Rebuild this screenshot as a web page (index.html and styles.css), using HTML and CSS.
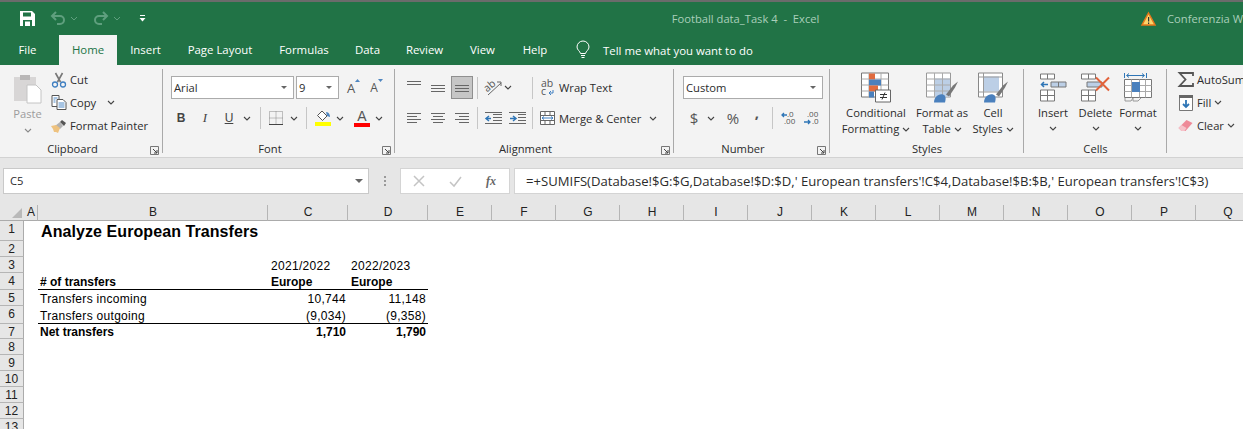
FILE: index.html
```html
<!DOCTYPE html>
<html lang="en">

<head>
    <meta charset="UTF-8">
    <title>Football data_Task 4 - Excel</title>
    <link rel="stylesheet" href="styles.css">
</head>

<body>
    <svg class="defs" width="0" height="0">
        <symbol id="chev" viewBox="0 0 8 5"><path d="M1 1l3 3 3-3" fill="none" stroke="#444" stroke-width="1.1"/></symbol>
        <symbol id="launch" viewBox="0 0 9 9"><path d="M.5 8.5v-8h8v8z M.5 .5" fill="none" stroke="#777"/><path d="M3 3l4 4M7 4v3H4" fill="none" stroke="#444"/></symbol>
        <symbol id="lines-left" viewBox="0 0 16 12"><path d="M1 1.5h14M1 4.5h10M1 7.5h14M1 10.5h10" stroke="#666"/></symbol>
        <symbol id="lines-center" viewBox="0 0 16 12"><path d="M1 1.5h14M3 4.5h10M1 7.5h14M3 10.5h10" stroke="#666"/></symbol>
        <symbol id="lines-right" viewBox="0 0 16 12"><path d="M1 1.5h14M5 4.5h10M1 7.5h14M5 10.5h10" stroke="#666"/></symbol>
    </svg>

    <header class="titlebar">
        <div class="quick">
            <svg class="save" width="15" height="15" viewBox="0 0 15 15"><path d="M0 0h12l3 3v12H0z" fill="#fff"/><path d="M3 1.5h8v4H3z" fill="#217346"/><path d="M3 9h9v6H3z" fill="#217346"/><path d="M5 10.5h5V15H5z" fill="#fff"/></svg>
            <svg class="undo" width="16" height="15" viewBox="0 0 16 15"><path d="M6 1L2 5l4 4M2 5h8a4 4 0 0 1 0 8H7" fill="none" stroke="#5f9f7e" stroke-width="2"/></svg>
            <svg class="qchev" width="8" height="5"><path d="M1 1l3 3 3-3" fill="none" stroke="#5f9f7e"/></svg>
            <svg class="redo" width="16" height="15" viewBox="0 0 16 15"><path d="M10 1l4 4-4 4M14 5H6a4 4 0 0 0 0 8h3" fill="none" stroke="#5f9f7e" stroke-width="2"/></svg>
            <svg class="qchev" width="8" height="5"><path d="M1 1l3 3 3-3" fill="none" stroke="#5f9f7e"/></svg>
            <svg class="custom" width="7" height="7" viewBox="0 0 7 7"><path d="M1 .5h5" stroke="#fff"/><path d="M.5 3h6L3.500 6.500z" fill="#fff"/></svg>
        </div>
        <div class="doc-title">Football data_Task 4&nbsp; -&nbsp; Excel</div>
        <div class="alert">
            <svg width="15" height="14" viewBox="0 0 15 14"><path d="M7.500 1L14 13H1z" fill="#fbd46b" stroke="#e8771a" stroke-width="1.500"/><path d="M7 5h1.200v4.500H7zM7 10.500h1.200V12H7z" fill="#333"/></svg>
            <span>Conferenzia W</span>
        </div>
    </header>

    <nav class="tabs">
        <span class="tab tab-file">File</span>
        <span class="tab tab-home">Home</span>
        <span class="tab tab-insert">Insert</span>
        <span class="tab tab-layout">Page Layout</span>
        <span class="tab tab-formulas">Formulas</span>
        <span class="tab tab-data">Data</span>
        <span class="tab tab-review">Review</span>
        <span class="tab tab-view">View</span>
        <span class="tab tab-help">Help</span>
        <svg class="bulb" width="14" height="18" viewBox="0 0 14 18"><path d="M4.500 12.500C4 10 1 9 1 6a6 6 0 0 1 12 0c0 3-3 4-3.500 6.500z" fill="none" stroke="#fff"/><path d="M5 14.500h4M5.500 16.500h3" stroke="#fff"/></svg>
        <span class="tell">Tell me what you want to do</span>
    </nav>

    <section class="ribbon">
        <!-- clipboard -->
        <div class="group g-clipboard">
            <div class="body body-row">
                <div class="paste">
                    <svg width="29" height="31" viewBox="0 0 29 31"><path d="M1 4h22v24H1z" fill="#d8d6d6"/><path d="M7 2h10v5H7z" fill="#b9b7b7"/><path d="M14 12h9l5 5v13H14z" fill="#fff" stroke="#c4c4c4"/></svg>
                    <span class="paste-label">Paste</span>
                    <svg class="chev chev-dim" width="8" height="5"><use href="#chev"/></svg>
                </div>
                <div class="small-list">
                    <div class="small">
                        <svg width="15" height="16" viewBox="0 0 15 16"><path d="M4 1l5 9M11 1L6 10" stroke="#777" stroke-width="1.600"/><circle cx="3.500" cy="12.500" r="2.500" fill="none" stroke="#3f7fc1" stroke-width="1.300"/><circle cx="11.500" cy="12.500" r="2.500" fill="none" stroke="#3f7fc1" stroke-width="1.300"/></svg>
                        <span>Cut</span>
                    </div>
                    <div class="small">
                        <svg width="15" height="15" viewBox="0 0 15 15"><path d="M.5.500h7v11h-7z" fill="#fff" stroke="#555"/><path d="M5.500 4.500h6l3 3v7h-9z" fill="#fff" stroke="#555"/><path d="M2 3h4M2 5h2M2 7h2M7 8h6M7 10h6M7 12h6" stroke="#4f8ac8"/></svg>
                        <span>Copy</span>
                        <svg class="chev chev-copy" width="8" height="5"><use href="#chev"/></svg>
                    </div>
                    <div class="small">
                        <svg width="16" height="14" viewBox="0 0 16 14"><path d="M9 3l2-2 4 3-2 3z" fill="#555"/><path d="M9 3l3 4-3 3-5-3z" fill="#7a7a7a" opacity=".55"/><path d="M0 7l5-1 4 3-2 5-2-1-2 0-1-3z" fill="#eec27f"/></svg>
                        <span>Format Painter</span>
                    </div>
                </div>
            </div>
            <div class="foot"><span>Clipboard</span><svg class="launch" width="9" height="9"><use href="#launch"/></svg></div>
        </div>

        <!-- font -->
        <div class="group g-font">
            <div class="body">
                <div class="row row-top">
                    <div class="combo combo-font">Arial<i class="drop"></i></div>
                    <div class="combo combo-size">9<i class="drop"></i></div>
                    <div class="grow">
                        <span>A</span>
                        <svg width="5" height="3" viewBox="0 0 5 3"><path d="M0 3l2.500-3L5 3z" fill="#4f86c0"/></svg>
                    </div>
                    <div class="shrink">
                        <span>A</span>
                        <svg width="5" height="3" viewBox="0 0 5 3"><path d="M0 0h5L2.500 3z" fill="#4f86c0"/></svg>
                    </div>
                </div>
                <div class="row row-bottom row-font2">
                    <b class="cell-24 glyph">B</b>
                    <i class="cell-24 glyph glyph-i">I</i>
                    <u class="cell-24 glyph glyph-u">U</u>
                    <svg class="chev cell-12" width="8" height="5"><use href="#chev"/></svg>
                    <span class="sep sep-f1"></span>
                    <svg class="ic-border" width="14" height="14" viewBox="0 0 14 14"><path d="M.5.500h13v13H.5zM7 .5v13M.5 7h13" fill="none" stroke="#888" stroke-dasharray="1 1"/><path d="M0 13.500h14" stroke="#444"/></svg>
                    <svg class="chev chev-border" width="8" height="5"><use href="#chev"/></svg>
                    <span class="sep sep-f2"></span>
                    <svg class="ic-fill" width="16" height="16" viewBox="0 0 16 16"><path d="M7 1l5 5-4.500 4.500-5-5z" fill="#fff" stroke="#555"/><path d="M11 2c3 0 4 3 4 5l-3-1z" fill="#4f86c0"/><path d="M0 12h16v4H0z" fill="#ffff00"/></svg>
                    <svg class="chev" width="8" height="5"><use href="#chev"/></svg>
                    <span class="font-color"><span>A</span></span>
                    <svg class="chev" width="8" height="5"><use href="#chev"/></svg>
                </div>
            </div>
            <div class="foot"><span>Font</span><svg class="launch" width="9" height="9"><use href="#launch"/></svg></div>
        </div>

        <!-- alignment -->
        <div class="group g-align">
            <div class="body">
                <div class="row row-top row-align">
                    <span class="cell-24"><svg class="lift" width="16" height="8" viewBox="0 0 16 8"><path d="M1 .5h14M1 3.500h14" stroke="#666"/></svg></span>
                    <span class="cell-24"><svg width="16" height="8" viewBox="0 0 16 8"><path d="M1 1.500h14M1 4.500h14M1 7.500h14" stroke="#666"/></svg></span>
                    <span class="valign-on"><svg width="16" height="8" viewBox="0 0 16 8"><path d="M1 .5h14M1 3.500h14M1 6.500h14" stroke="#666"/></svg></span>
                    <span class="sep sep-a1"></span>
                    <svg class="ic-orient" width="19" height="17" viewBox="0 0 19 17"><path d="M4 16L17 4" stroke="#666"/><path d="M13 3h4v4" fill="none" stroke="#666"/><text x="0" y="11" class="orient-text" transform="rotate(-40 5 8)">ab</text></svg>
                    <svg class="chev chev-orient" width="8" height="5"><use href="#chev"/></svg>
                    <span class="sep sep-a2"></span>
                    <div class="wrap">
                        <svg width="14" height="16" viewBox="0 0 14 16"><text class="wrap-ab"><tspan x="0" y="7">ab</tspan><tspan x="0" y="15">c</tspan></text><path d="M12 10v3H8M10 11l-2 2 2 2" fill="none" stroke="#3f7fc1"/></svg>
                        <span>Wrap Text</span>
                    </div>
                </div>
                <div class="row row-bottom row-align">
                    <span class="cell-24"><svg width="16" height="12"><use href="#lines-left"/></svg></span>
                    <span class="cell-24"><svg width="16" height="12"><use href="#lines-center"/></svg></span>
                    <span class="cell-24"><svg width="16" height="12"><use href="#lines-right"/></svg></span>
                    <span class="sep sep-a3"></span>
                    <span class="cell-24"><svg width="17" height="13" viewBox="0 0 17 13"><path d="M8 2.500h9M8 5.500h9M8 8.500h9M0 .5h17M0 11.500h17" stroke="#666"/><path d="M6 6.500H2M4 4L1 6.500 4 9" fill="none" stroke="#2e75b6" stroke-width="1.500"/></svg></span>
                    <span class="cell-24"><svg width="17" height="13" viewBox="0 0 17 13"><path d="M9 2.500h8M9 5.500h8M9 8.500h8M0 .5h17M0 11.500h17" stroke="#666"/><path d="M1 6.500h5M4 4l3 2.500L4 9" fill="none" stroke="#2e75b6" stroke-width="1.500"/></svg></span>
                    <span class="sep sep-a4"></span>
                    <div class="merge">
                        <svg width="15" height="14" viewBox="0 0 15 14"><path d="M.5.500h14v13H.5zM.5 4.500h14M.5 9.500h14M5 .5v4M10 .5v4M5 9.500v4M10 9.500v4" fill="#fff" stroke="#666"/><path d="M2 7h11M4 5.500L2 7l2 1.500M11 5.500L13 7l-2 1.500" fill="none" stroke="#3f7fc1"/></svg>
                        <span>Merge &amp; Center</span>
                        <svg class="chev chev-merge" width="8" height="5"><use href="#chev"/></svg>
                    </div>
                </div>
            </div>
            <div class="foot"><span>Alignment</span><svg class="launch" width="9" height="9"><use href="#launch"/></svg></div>
        </div>

        <!-- number -->
        <div class="group g-number">
            <div class="body">
                <div class="row row-top">
                    <div class="combo combo-number">Custom<i class="drop"></i></div>
                </div>
                <div class="row row-bottom row-number">
                    <span class="cell-24 num-glyph num-dollar">$</span>
                    <svg class="chev chev-dollar" width="8" height="5"><use href="#chev"/></svg>
                    <span class="num-glyph num-percent">%</span>
                    <span class="num-glyph num-comma">,</span>
                    <span class="sep sep-n1"></span>
                    <svg class="ic-dec" width="17" height="14" viewBox="0 0 17 14"><text class="dec-text"><tspan x="6" y="6">.0</tspan><tspan x="3" y="13">.00</tspan></text><path d="M6 4H1M3 2L1 4l2 2" fill="none" stroke="#2e75b6" stroke-width="1.300"/></svg>
                    <svg class="ic-dec ic-dec2" width="17" height="14" viewBox="0 0 17 14"><text class="dec-text"><tspan x="3" y="6">.00</tspan><tspan x="8" y="13">.0</tspan></text><path d="M0 11h6M4 9l2 2-2 2" fill="none" stroke="#2e75b6" stroke-width="1.300"/></svg>
                </div>
            </div>
            <div class="foot"><span>Number</span><svg class="launch" width="9" height="9"><use href="#launch"/></svg></div>
        </div>

        <!-- styles -->
        <div class="group g-styles">
            <div class="body body-row">
                <div class="big big-cond">
                    <svg width="31" height="30" viewBox="0 0 31 30"><path d="M.5.500h27v24H.5z" fill="#fff" stroke="#777"/><path d="M8 .5v24M20 .5v24M.5 6.500h27M.5 12.500h27M.5 18.500h27" stroke="#aaa"/><path d="M8 1h6v6H8z" fill="#e06b3f"/><path d="M8 7h12v6H8z" fill="#4a80bd"/><path d="M8 13h9v6H8z" fill="#e06b3f"/><path d="M8 19h5v6H8z" fill="#4a80bd"/><path d="M14.500 17.500h15v12h-15z" fill="#fff" stroke="#666"/><path d="M19 22h7M19 25h7M24 20l-3 7" fill="none" stroke="#333"/></svg>
                    <span class="big-label">Conditional<br>Formatting <svg class="chev" width="8" height="5"><use href="#chev"/></svg></span>
                </div>
                <div class="big big-table">
                    <svg width="32" height="30" viewBox="0 0 32 30"><path d="M.5.500h24v24H.5z" fill="#fff" stroke="#999"/><path d="M8 6h16v18H8z" fill="#bccfe6"/><path d="M.5 6.500h24M.5 12.500h24M.5 18.500h24M8.500.5v24M16.500.5v24" stroke="#aaa"/><path d="M20 22l7-9 5-4-3 6-6 9z" fill="#777"/><path d="M8 30c0-5 4-9 9-8 3 1 3 4 2 8z" fill="#4a80bd"/></svg>
                    <span class="big-label">Format as<br>Table <svg class="chev" width="8" height="5"><use href="#chev"/></svg></span>
                </div>
                <div class="big big-cell">
                    <svg width="30" height="30" viewBox="0 0 30 30"><path d="M.5.500h24v24H.5z" fill="#fff" stroke="#888"/><path d="M5 4h16v15H5z" fill="#bccfe6"/><path d="M.5 4.500h24M.5 19.500h24M5.500.5v24" stroke="#999"/><path d="M18 22l7-9 5-4-3 6-6 9z" fill="#777"/><path d="M6 30c0-5 4-9 9-8 3 1 3 4 2 8z" fill="#4a80bd"/></svg>
                    <span class="big-label">Cell<br>Styles <svg class="chev" width="8" height="5"><use href="#chev"/></svg></span>
                </div>
            </div>
            <div class="foot foot-plain"><span>Styles</span></div>
        </div>

        <!-- cells -->
        <div class="group g-cells">
            <div class="body body-row">
                <div class="big big-insert">
                    <svg width="26" height="28" viewBox="0 0 26 28"><path d="M.5.500h14v5H.5zM7.500.5v5M.5 16.500h14v11H.5zM.5 22h14M7.500 16.500v11" fill="#fff" stroke="#777"/><path d="M11 8.500h15v5H11z" fill="#bccfe6" stroke="#777"/><path d="M18.500 8.500v5" stroke="#777"/><path d="M8 11H2M4 8.500L1.500 11 4 13.500" fill="none" stroke="#2e75b6" stroke-width="1.500"/></svg>
                    <span class="big-label">Insert<br><svg class="chev" width="8" height="5"><use href="#chev"/></svg></span>
                </div>
                <div class="big big-delete">
                    <svg width="30" height="28" viewBox="0 0 30 28"><path d="M.5.500h14v5H.5zM7.500.5v5M.5 16.500h14v11H.5zM.5 22h14M7.500 16.500v11" fill="#fff" stroke="#777"/><path d="M6 8.500h15v5H6z" fill="#bccfe6" stroke="#777"/><path d="M15 4l13 13M28 4L15 17" stroke="#e2623a" stroke-width="2"/></svg>
                    <span class="big-label">Delete<br><svg class="chev" width="8" height="5"><use href="#chev"/></svg></span>
                </div>
                <div class="big big-format">
                    <svg width="28" height="31" viewBox="0 0 28 31"><path d="M.5 1v5M22.500 1v5M3 3.500h17M5 1.500L2.500 3.500 5 5.500M18 1.500l2.500 2L18 5.500" fill="none" stroke="#2e75b6"/><path d="M.5 7.500h27v18H.5z" fill="#fff" stroke="#777"/><path d="M7.500 7.500v18M15.500 7.500v18M21.500 7.500v18M.5 19.500h27M.5 13.500h27" stroke="#aaa"/><path d="M8 10h8v10H8z" fill="#4a80bd"/><path d="M1 26v3h6l2-3M9 26v3h5l3-3" fill="none" stroke="#999"/></svg>
                    <span class="big-label">Format<br><svg class="chev" width="8" height="5"><use href="#chev"/></svg></span>
                </div>
            </div>
            <div class="foot foot-plain"><span>Cells</span></div>
        </div>

        <!-- editing, cut off by the window -->
        <div class="group g-edit">
            <div class="body small-list">
                <div class="small">
                    <svg width="15" height="15" viewBox="0 0 15 15"><path d="M14.500 4V1H1l6 6.500L1 14h13.500v-3" fill="none" stroke="#555" stroke-width="1.800"/></svg>
                    <span>AutoSum</span>
                </div>
                <div class="small">
                    <svg width="14" height="16" viewBox="0 0 14 16"><path d="M.5.500h13v15H.5z" fill="#fff" stroke="#777"/><path d="M0 0h14v3H0z" fill="#666"/><path d="M7 5v7M4 9l3 3 3-3" fill="none" stroke="#2e75b6" stroke-width="1.800"/></svg>
                    <span>Fill</span>
                    <svg class="chev chev-tight" width="8" height="5"><use href="#chev"/></svg>
                </div>
                <div class="small">
                    <svg width="15" height="13" viewBox="0 0 15 13"><path d="M0 9l8-8 6 3-7 8H3z" fill="#ee8a98"/><path d="M0 9l3-3 5 3-2 3H3z" fill="#f6c3ca"/></svg>
                    <span>Clear</span>
                    <svg class="chev chev-tight" width="8" height="5"><use href="#chev"/></svg>
                </div>
            </div>
        </div>
    </section>

    <section class="formula-bar">
        <div class="name-box">C5<i class="drop"></i></div>
        <div class="grip"></div>
        <div class="fx-box">
            <svg width="12" height="12" viewBox="0 0 12 12"><path d="M1 1l10 10M11 1L1 11" stroke="#c4c4c4" stroke-width="1.500"/></svg>
            <svg width="13" height="11" viewBox="0 0 13 11"><path d="M1 6l4 4 7-9" fill="none" stroke="#c4c4c4" stroke-width="1.500"/></svg>
            <span class="fx">fx</span>
        </div>
        <div class="formula">=+SUMIFS(Database!$G:$G,Database!$D:$D,' European transfers'!C$4,Database!$B:$B,' European transfers'!C$3)</div>
    </section>

    <main class="sheet">
        <div class="corner"><i></i></div>
        <div class="col">A</div>
        <div class="col">B</div>
        <div class="col">C</div>
        <div class="col">D</div>
        <div class="col">E</div>
        <div class="col">F</div>
        <div class="col">G</div>
        <div class="col">H</div>
        <div class="col">I</div>
        <div class="col">J</div>
        <div class="col">K</div>
        <div class="col">L</div>
        <div class="col">M</div>
        <div class="col">N</div>
        <div class="col">O</div>
        <div class="col">P</div>
        <div class="col">Q</div>

        <div class="rowh r1">1</div>
        <div class="rowh r2">2</div>
        <div class="rowh r3">3</div>
        <div class="rowh r4">4</div>
        <div class="rowh r5">5</div>
        <div class="rowh r6">6</div>
        <div class="rowh r7">7</div>
        <div class="rowh r8">8</div>
        <div class="rowh r9">9</div>
        <div class="rowh r10">10</div>
        <div class="rowh r11">11</div>
        <div class="rowh r12">12</div>
        <div class="rowh r13">13</div>

        <div class="cell title r1 cb">Analyze European Transfers</div>
        <div class="cell r3 cc">2021/2022</div>
        <div class="cell r3 cd">2022/2023</div>
        <div class="cell strong line r4 cb"># of transfers</div>
        <div class="cell strong line r4 cc">Europe</div>
        <div class="cell strong line r4 cd">Europe</div>
        <div class="cell r5 cb">Transfers incoming</div>
        <div class="cell num r5 cc">10,744</div>
        <div class="cell num r5 cd">11,148</div>
        <div class="cell line r6 cb">Transfers outgoing</div>
        <div class="cell num line r6 cc">(9,034)</div>
        <div class="cell num line r6 cd">(9,358)</div>
        <div class="cell strong r7 cb">Net transfers</div>
        <div class="cell strong num r7 cc">1,710</div>
        <div class="cell strong num r7 cd">1,790</div>
    </main>
</body>

</html>
```

FILE: styles.css
```css
* {
    box-sizing: border-box;
}

html,
body {
    margin: 0;
    height: 429px;
    overflow: hidden;
}

body {
    width: 1243px;
    background-color: #fff;
    font-family: "Open Sans", "Noto Sans", sans-serif;
    font-size: 11.2px;
    color: #2b2b2b;
}

svg {
    display: block;
    flex: none;
    overflow: visible;
}

.defs {
    position: absolute;
}

/* title bar */
.titlebar {
    display: flex;
    align-items: center;
    height: 35px;
    border-top: 2px solid #6b6b6b;
    background-color: #217346;
    color: #a9cfba;
}

.quick {
    display: flex;
    align-items: center;
    width: 674px;
    padding-left: 20px;
}

.undo {
    margin-left: 15px;
}

.redo {
    margin-left: 15px;
}

.qchev {
    margin-left: 4px;
}

.custom {
    margin-left: 18px;
}

.doc-title {
    width: 471px;
    white-space: nowrap;
}

.alert {
    display: flex;
    align-items: center;
    gap: 11px;
    white-space: nowrap;
}

/* tabs */
.tabs {
    display: flex;
    align-items: center;
    height: 30px;
    background-color: #217346;
    color: #fff;
    font-size: 11.4px;
}

.tab {
    display: block;
    flex: none;
    line-height: 30px;
    text-align: center;
}

.tab-file {
    width: 55px;
}

.tab-home {
    width: 58px;
    margin-left: 4px;
    background-color: #f3f3f3;
    color: #217346;
}

.tab-insert {
    width: 57px;
}

.tab-layout {
    width: 92px;
}

.tab-formulas {
    width: 76px;
}

.tab-data {
    width: 51px;
}

.tab-review {
    width: 63px;
}

.tab-view {
    width: 53px;
}

.tab-help {
    width: 52px;
}

.bulb {
    margin-left: 15px;
}

.tell {
    margin-left: 13px;
}

/* ribbon */
.ribbon {
    display: flex;
    height: 93px;
    padding-top: 4px;
    border-bottom: 1px solid #d2d2d2;
    background-color: #f3f3f3;
}

.group {
    display: flex;
    flex: none;
    flex-direction: column;
    height: 84px;
    border-right: 1px solid #a9a9a9;
}

.g-clipboard {
    width: 163px;
}

.g-font {
    width: 232px;
}

.g-align {
    width: 279px;
}

.g-number {
    width: 156px;
}

.g-styles {
    width: 194px;
}

.g-cells {
    width: 143px;
}

.g-edit {
    border-right: 0;
    white-space: nowrap;
}

.body {
    height: 72px;
}

.body-row {
    display: flex;
}

.foot {
    position: relative;
    height: 12px;
    padding-right: 17px;
    line-height: 16px;
    text-align: center;
}

.foot-plain {
    padding-right: 0;
    padding-left: 1px;
}

.launch {
    position: absolute;
    right: 3px;
    top: 5px;
}

.row {
    display: flex;
    align-items: center;
}

.row-top {
    height: 23px;
    margin-top: 7px;
}

.row-bottom {
    height: 22px;
    margin-top: 8px;
}

.cell-24 {
    display: flex;
    flex: none;
    align-items: center;
    justify-content: center;
    width: 24px;
}

.cell-12 {
    margin: 0 2px;
}

.sep {
    flex: none;
    width: 1px;
    height: 22px;
    background-color: #c6c6c6;
}

.chev-dim {
    opacity: .6;
}

.lift {
    margin-top: -5px;
}

/* clipboard */
.paste {
    display: flex;
    flex-direction: column;
    align-items: center;
    width: 51px;
    padding: 4px 0 0 4px;
    color: #9c9c9c;
}

.paste-label {
    margin-top: 2px;
    line-height: 16px;
}

.paste .chev {
    margin-top: 6px;
}

.small-list {
    margin-top: -1px;
}

.small {
    display: flex;
    align-items: center;
    height: 23px;
    white-space: nowrap;
}

.small svg:first-child {
    width: 16px;
    margin-right: 3px;
}

.chev-copy {
    margin-left: 11px;
}

.chev-tight {
    margin-left: 3px;
}

/* font */
.g-font .row-top {
    padding-left: 8px;
}

.combo {
    position: relative;
    flex: none;
    height: 23px;
    padding-left: 2px;
    border: 1px solid #ababab;
    background-color: #fff;
    line-height: 21px;
}

.combo-font {
    width: 123px;
}

.combo-size {
    width: 43px;
    margin-left: 2px;
}

.drop {
    position: absolute;
    right: 6px;
    top: 9px;
    border-top: 3px solid #666;
    border-left: 3px solid transparent;
    border-right: 3px solid transparent;
}

.grow,
.shrink {
    display: flex;
    align-items: flex-start;
    margin-left: 8px;
    font-size: 13px;
    color: #555;
}

.shrink {
    margin-left: 10px;
    font-size: 12px;
}

.row-font2 {
    padding-left: 6px;
}

.glyph {
    font-family: "Liberation Sans", sans-serif;
    font-size: 12px;
    color: #444;
}

.glyph-i {
    font-family: "Liberation Serif", serif;
    font-size: 13px;
}

.sep-f1 {
    margin: 0 8px 0 7px;
}

.ic-border {
    margin-right: 7px;
}

.chev-border {
    margin-right: 8px;
}

.sep-f2 {
    margin-right: 8px;
}

.ic-fill {
    margin-right: 5px;
}

.font-color {
    display: flex;
    justify-content: center;
    width: 24px;
    margin: 0 1px 0 6px;
}

.font-color span {
    width: 16px;
    border-bottom: 4px solid #f00;
    font-family: "Liberation Sans", sans-serif;
    font-size: 14px;
    line-height: 14px;
    text-align: center;
    color: #555;
}

/* alignment */
.row-align {
    padding-left: 7px;
}

.valign-on {
    display: flex;
    align-items: flex-end;
    justify-content: center;
    width: 22px;
    height: 23px;
    margin-left: 1px;
    padding-bottom: 5px;
    border: 1px solid #8f8f8f;
    background-color: #c6c6c6;
}

.sep-a1 {
    margin: 0 4px;
}

.ic-orient {
    margin-left: 2px;
}

.chev-orient {
    margin-left: 1px;
}

.sep-a2 {
    margin-left: 20px;
}

.sep-a3 {
    margin: 0 3px;
}

.sep-a4 {
    margin-left: 3px;
}

.wrap,
.merge {
    display: flex;
    align-items: center;
    margin-left: 8px;
    white-space: nowrap;
}

.merge {
    margin-left: 7px;
}

.wrap span,
.merge span {
    margin-left: 4px;
}

.chev-merge {
    margin-left: 8px;
}

.orient-text,
.wrap-ab {
    font-size: 10.5px;
    fill: #555;
}

/* number */
.g-number .row-top {
    padding-left: 9px;
}

.combo-number {
    width: 140px;
}

.row-number {
    padding-left: 8px;
}

.num-glyph {
    flex: none;
    text-align: center;
    color: #555;
}

.num-dollar {
    font-size: 15px;
}

.chev-dollar {
    margin-left: 1px;
}

.num-percent {
    width: 34px;
    margin-left: 1px;
    font-size: 15px;
}

.num-comma {
    width: 14px;
    margin-bottom: 12px;
    font-size: 15px;
    font-weight: bold;
    line-height: 12px;
}

.sep-n1 {
    margin: 0 8px;
}

.ic-dec2 {
    margin-left: 6px;
}

.dec-text {
    font-size: 8px;
    fill: #555;
}

/* big buttons */
.g-styles .body {
    padding-left: 9px;
}

.g-cells .body {
    padding-left: 8px;
}

.big {
    display: flex;
    flex: none;
    flex-direction: column;
    align-items: center;
    padding-top: 3px;
    text-align: center;
    white-space: nowrap;
}

.big svg:first-child {
    height: 31px;
}

.big-label {
    margin-top: 2px;
    line-height: 16px;
}

.big-label .chev {
    display: inline-block;
    vertical-align: 1px;
}

.big-insert .chev,
.big-delete .chev,
.big-format .chev {
    vertical-align: 2px;
}

.big-cond {
    width: 74px;
}

.big-table {
    width: 58px;
}

.big-cell {
    width: 44px;
}

.big-insert {
    width: 42px;
}

.big-delete {
    width: 43px;
}

.big-format {
    width: 42px;
}

.g-edit .body {
    padding-left: 11px;
}

/* formula bar */
.formula-bar {
    display: flex;
    height: 47px;
    padding-top: 10px;
    background-color: #e6e6e6;
}

.name-box {
    position: relative;
    width: 366px;
    height: 26px;
    margin-left: 3px;
    padding-left: 6px;
    border: 1px solid #c9c9c9;
    background-color: #fff;
    line-height: 24px;
}

.name-box .drop {
    right: 5px;
    top: 10px;
    border-top-width: 4px;
    border-left-width: 4px;
    border-right-width: 4px;
}

.grip {
    width: 2px;
    height: 10px;
    margin: 8px 14px 0 15px;
    background-image: linear-gradient(#999 2px, transparent 2px);
    background-size: 2px 4px;
}

.fx-box {
    display: flex;
    align-items: center;
    width: 110px;
    height: 26px;
    padding-left: 12px;
    border: 1px solid #d4d4d4;
    background-color: #fff;
}

.fx-box svg + svg {
    margin-left: 24px;
}

.fx {
    margin-left: 24px;
    font-family: "Liberation Serif", serif;
    font-size: 12px;
    font-style: italic;
    font-weight: bold;
    color: #666;
}

.formula {
    flex: 1;
    height: 26px;
    margin-left: 4px;
    padding-left: 11px;
    border: 1px solid #d4d4d4;
    border-right: 0;
    background-color: #fff;
    font-size: 13.1px;
    line-height: 24px;
    white-space: nowrap;
}

/* sheet */
.sheet {
    display: grid;
    grid-template-columns: 24px 14px 230px 80px 80px repeat(13, 64px);
    grid-template-rows: 16px 20px 16px 16px 17px 16px 18px 15px 16px 16px 16px 16px 16px 16px;
    font-family: "Liberation Sans", sans-serif;
    font-size: 12px;
    color: #000;
}

.corner {
    position: relative;
    border-bottom: 1px solid #ababab;
    background-color: #e6e6e6;
}

.corner i {
    position: absolute;
    right: 2px;
    bottom: 2px;
    border-bottom: 10px solid #b9b9b9;
    border-left: 10px solid transparent;
}

.col {
    padding-left: 1px;
    border-right: 1px solid #b5b5b5;
    border-bottom: 1px solid #ababab;
    background-color: #e6e6e6;
    line-height: 15px;
    text-align: center;
    color: #222;
}

.rowh {
    grid-column: 1;
    border-right: 1px solid #ababab;
    border-bottom: 1px solid #b5b5b5;
    background-color: #e6e6e6;
    text-align: center;
    color: #222;
    line-height: 17px;
}

.r1 { grid-row: 2; }
.r2 { grid-row: 3; }
.r3 { grid-row: 4; }
.r4 { grid-row: 5; }
.r5 { grid-row: 6; }
.r6 { grid-row: 7; }
.r7 { grid-row: 8; }
.r8 { grid-row: 9; }
.r9 { grid-row: 10; }
.r10 { grid-row: 11; }
.r11 { grid-row: 12; }
.r12 { grid-row: 13; }
.r13 { grid-row: 14; }

.cb { grid-column: 3; padding-left: 2px; }
.cc { grid-column: 4; }
.cd { grid-column: 5; }

.cell {
    display: flex;
    align-items: flex-end;
    padding-right: 2px;
    line-height: 13px;
    letter-spacing: .3px;
    white-space: nowrap;
}

.cc,
.cd {
    padding-left: 3px;
}

.title {
    padding-left: 3px;
    font-size: 16px;
    font-weight: bold;
    line-height: 18px;
    letter-spacing: .08px;
}

.strong {
    font-weight: bold;
    letter-spacing: 0;
}

.num {
    justify-content: flex-end;
}

.line {
    border-bottom: 1px solid #000;
}
```
